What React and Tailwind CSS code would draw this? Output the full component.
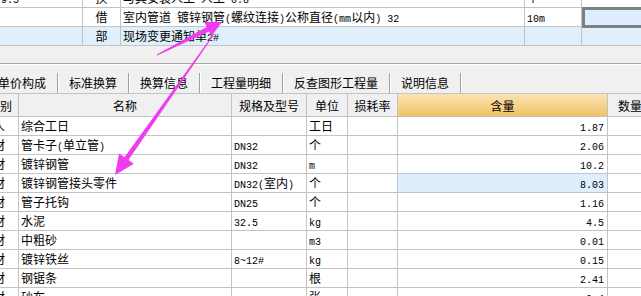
import React from "react";

const CJK = { fontFamily: '"Noto Sans CJK SC", "Noto Sans", sans-serif' };

// ASCII runs get a narrow mono face, like the SimSun half-width glyphs
const T = ({ text }) => {
  const parts = text.split(/([\x20-\x7e]+)/).filter(Boolean);
  return (
    <>
      {parts.map((p, i) =>
        /^[\x20-\x7e]+$/.test(p) ? (
          <span key={i} className="font-['Liberation_Mono',monospace] text-[10px] whitespace-pre">
            {p}
          </span>
        ) : (
          <span key={i}>{p}</span>
        )
      )}
    </>
  );
};

const rows = [
  { t: "人", name: "综合工日", spec: "", unit: "工日", qty: "1.87" },
  { t: "材", name: "管卡子(单立管)", spec: "DN32", unit: "个", qty: "2.06" },
  { t: "材", name: "镀锌钢管", spec: "DN32", unit: "m", qty: "10.2" },
  { t: "材", name: "镀锌钢管接头零件", spec: "DN32(室内)", unit: "个", qty: "8.03", sel: true },
  { t: "材", name: "管子托钩", spec: "DN25", unit: "个", qty: "1.16" },
  { t: "材", name: "水泥", spec: "32.5", unit: "kg", qty: "4.5" },
  { t: "材", name: "中粗砂", spec: "", unit: "m3", qty: "0.01" },
  { t: "材", name: "镀锌铁丝", spec: "8~12#", unit: "kg", qty: "0.15" },
  { t: "材", name: "钢锯条", spec: "", unit: "根", qty: "2.41" },
  { t: "材", name: "砂布", spec: "", unit: "张", qty: "0.4" },
];

const tabs = ["单价构成", "标准换算", "换算信息", "工程量明细", "反查图形工程量", "说明信息"];

export default function App() {
  return (
    <div className="relative w-[641px] h-[296px] overflow-hidden bg-[#f0f0f0] text-[12px] text-black" style={CJK}>
      {/* upper grid */}
      <div className="-mt-[11px] bg-white">
        {[
          { a: "9.5", b: "换", c: "与其安装人工 人工*0.8", d: "个", bg: "bg-white" },
          { a: "", b: "借", c: "室内管道 镀锌钢管(螺纹连接)公称直径(mm以内) 32", d: "10m", bg: "bg-white", cur: true },
          { a: "", b: "部", c: "现场变更通知单2#", d: "", bg: "bg-[#dff0fc]" },
        ].map((r, i) => (
          <div key={i} className={`flex h-[19px] border-b border-[#c4c4c4] leading-[18px] ${r.bg}`}>
            <div className="w-[83px] shrink-0 border-r border-[#c4c4c4] pl-[1px] overflow-hidden"><T text={r.a} /></div>
            <div className="w-[38px] shrink-0 border-r border-[#c4c4c4] text-center">{r.b}</div>
            <div className="w-[404px] shrink-0 border-r border-[#c4c4c4] pl-[2px] whitespace-nowrap overflow-hidden"><T text={r.c} /></div>
            <div className="w-[57px] shrink-0 border-r border-[#c4c4c4] pl-[2px]"><T text={r.d} /></div>
            {r.cur ? (
              <div className="flex-1 -mt-[1px] h-[21px] border-[3px] border-r-0 border-[#808080] bg-[#dfeefc]" />
            ) : (
              <div className="flex-1" />
            )}
          </div>
        ))}
      </div>

      {/* gap band */}
      <div className="h-[18px] bg-[#f0f0f0] border-b border-[#a8a8a8]" />

      {/* tab bar */}
      <div className="h-[29px] border-t border-white flex items-end -ml-[12px]">
        {tabs.map((t, i) => (
          <div key={i} className="flex items-end h-[20px]">
            <div className="pl-[10px] pr-[11px] h-full leading-[20px] whitespace-nowrap">{t}</div>
            <div className="w-[2px] h-[20px] border-l border-[#a0a0a0] border-r border-r-white" />
          </div>
        ))}
      </div>

      {/* header */}
      <div className="flex h-[24px] border-t border-[#a0a0a0] border-b border-[#c4c4c4] bg-[#f0f0f0] leading-[23px] whitespace-nowrap">
        <div className="w-[19px] shrink-0 border-r border-[#c4c4c4] overflow-hidden"><span className="-ml-[12px] inline-block">类别</span></div>
        <div className="w-[213px] shrink-0 border-r border-[#c4c4c4] text-center">名称</div>
        <div className="w-[75px] shrink-0 border-r border-[#c4c4c4] text-center">规格及型号</div>
        <div className="w-[41px] shrink-0 border-r border-[#c4c4c4] text-center">单位</div>
        <div className="w-[50px] shrink-0 border-r border-[#c4c4c4] text-center">损耗率</div>
        <div className="w-[210px] shrink-0 border-r border-[#c4c4c4] text-center bg-gradient-to-b from-[#fbe3b4] to-[#f1c264]">含量</div>
        <div className="flex-1 pl-[10px]">数量</div>
      </div>

      {/* lower grid */}
      <div className="bg-white">
        {rows.map((r, i) => (
          <div key={i} className="flex h-[19px] border-b border-[#c4c4c4] leading-[18px] whitespace-nowrap">
            <div className="w-[19px] shrink-0 border-r border-[#c4c4c4] overflow-hidden"><span className="-ml-[7px] inline-block">{r.t}</span></div>
            <div className="w-[213px] shrink-0 border-r border-[#c4c4c4] pl-[2px]"><T text={r.name} /></div>
            <div className="w-[75px] shrink-0 border-r border-[#c4c4c4] pl-[2px]"><T text={r.spec} /></div>
            <div className="w-[41px] shrink-0 border-r border-[#c4c4c4] pl-[2px]"><T text={r.unit} /></div>
            <div className="w-[50px] shrink-0 border-r border-[#c4c4c4]" />
            <div className={`w-[210px] shrink-0 border-r border-[#c4c4c4] pr-[3px] text-right ${r.sel ? "bg-[#deeefc]" : ""}`}><T text={r.qty} /></div>
            <div className="flex-1" />
          </div>
        ))}
      </div>

      {/* annotation arrows */}
      <svg className="absolute inset-0 pointer-events-none" width="641" height="296" viewBox="0 0 641 296">
        <polygon
          fill="#f03cf0"
          points="157.2,55.4 208.9,31.4 211.4,36.3 222,22 204.2,22.1 206.7,26.9 156.8,54.6"
        />
        <polygon
          fill="#f03cf0"
          points="214.4,34.3 128.5,160 133.9,163.8 115,175 119.1,153.4 124.5,157.2 213.6,33.7"
        />
      </svg>
    </div>
  );
}
